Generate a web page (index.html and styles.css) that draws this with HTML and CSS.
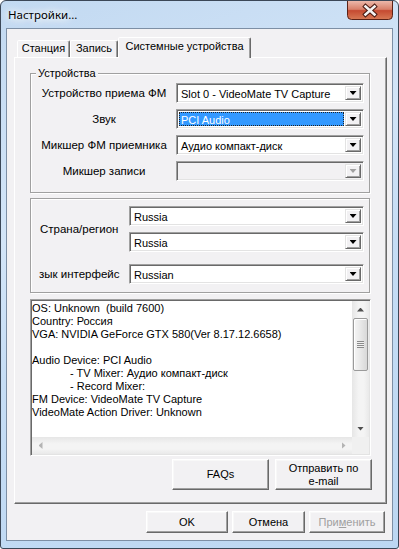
FILE: index.html
```html
<!DOCTYPE html>
<html lang="ru">
<head>
<meta charset="utf-8">
<title>Настройки</title>
<link rel="stylesheet" href="styles.css">
</head>
<body>
<div class="window">
  <div class="titlebar">
    <span class="title">Настройки...</span>
    <div class="close">
      <svg width="46" height="19" viewBox="0 0 46 19">
        <defs>
          <linearGradient id="cg" x1="0" y1="0" x2="0" y2="1">
            <stop offset="0" stop-color="#ecb8aa"/>
            <stop offset="0.45" stop-color="#d8806a"/>
            <stop offset="0.52" stop-color="#c54a31"/>
            <stop offset="1" stop-color="#d77a55"/>
          </linearGradient>
        </defs>
        <path d="M0.5 0 V14.5 Q0.5 18.5 4.5 18.5 H41.5 Q45.5 18.5 45.5 14.5 V0" fill="url(#cg)" stroke="#5a2217"/>
        <path d="M18.5 5.5 L27.5 13.5 M27.5 5.5 L18.5 13.5" stroke="#4a1a12" stroke-width="4.6" stroke-linecap="square"/>
        <path d="M18.5 5.5 L27.5 13.5 M27.5 5.5 L18.5 13.5" stroke="#f4f4f4" stroke-width="2.6" stroke-linecap="square"/>
      </svg>
    </div>
  </div>
  <div class="client">
    <div class="tabs">
      <div class="tab t1">Станция</div>
      <div class="tab t2">Запись</div>
      <div class="tab t3 active">Системные устройства</div>
    </div>
    <div class="panel">
      <fieldset class="group g1">
        <legend>Устройства</legend>
        <div class="grid1">
          <span class="lbl">Устройство приема ФМ</span>
          <div class="combo"><span class="val">Slot 0 - VideoMate TV Capture</span><span class="dd"></span></div>
          <span class="lbl">Звук</span>
          <div class="combo"><span class="val sel">PCI Audio</span><span class="dd"></span></div>
          <span class="lbl">Микшер ФМ приемника</span>
          <div class="combo"><span class="val">Аудио компакт-диск</span><span class="dd"></span></div>
          <span class="lbl">Микшер записи</span>
          <div class="combo disabled"><span class="val"></span><span class="dd"></span></div>
        </div>
      </fieldset>
      <div class="group g2">
        <span class="lbl2 span2">Страна/регион</span>
        <div class="combo"><span class="val">Russia</span><span class="dd"></span></div>
        <div class="combo"><span class="val">Russia</span><span class="dd"></span></div>
        <span class="lbl2 last">зык интерфейс</span>
        <div class="combo last"><span class="val">Russian</span><span class="dd"></span></div>
      </div>
      <div class="info">
        <div class="text">OS: Unknown  (build 7600)
Country: Россия
VGA: NVIDIA GeForce GTX 580(Ver 8.17.12.6658)

Audio Device: PCI Audio
<span class="ind">- TV Mixer: Аудио компакт-диск</span>
<span class="ind">- Record Mixer:</span>
FM Device: VideoMate TV Capture
VideoMate Action Driver: Unknown</div>
        <div class="vscroll">
          <span class="arr up"></span>
          <span class="thumb"><span class="grip"></span></span>
          <span class="track"></span>
          <span class="arr down"></span>
        </div>
        <div class="hscroll">
          <span class="arr left"></span>
          <span class="htrack"></span>
          <span class="arr right"></span>
        </div>
        <div class="corner"></div>
      </div>
      <div class="actions">
        <button class="btn big">FAQs</button>
        <button class="btn big">Отправить по<br>e-mail</button>
      </div>
    </div>
    <div class="footer">
      <button class="btn b-ok">OK</button>
      <button class="btn b-cancel">Отмена</button>
      <button class="btn b-apply" disabled>При<u>м</u>енить</button>
    </div>
  </div>
</div>
</body>
</html>
```
FILE: styles.css
```css
* { box-sizing: border-box; }
html, body { margin: 0; padding: 0; }
body {
  width: 399px;
  height: 549px;
  overflow: hidden;
  background: #fff;
  font-family: "Liberation Sans", Arial, sans-serif;
  font-size: 11px;
  color: #000;
}

.window {
  width: 399px;
  height: 549px;
  border: 1px solid #3b4757;
  border-radius: 6px 6px 3px 3px;
  background: linear-gradient(160deg, #c2d9f1 0%, #d3e5f8 35%, #c6ddf5 55%, #bcd7f2 100%);
  padding: 0 5px 7px;
  display: flex;
  flex-direction: column;
}

.titlebar {
  height: 27px;
  display: flex;
  justify-content: space-between;
  align-items: flex-start;
}
.title {
  padding: 7px 0 0 2px;
  font-family: "Noto Sans", "Open Sans", sans-serif;
  font-size: 11.5px;
  line-height: 14px;
  color: #000;
  text-shadow: 0 0 6px #fff, 0 0 10px #fff, 0 0 12px #eef6ff;
}
.close { width: 46px; height: 19px; }
.close svg { display: block; }

.client {
  flex: 1;
  border: 1px solid #7d8fa5;
  background: #f2f1f3;
  padding: 8px 5px 0 7px;
  display: flex;
  flex-direction: column;
}

.tabs {
  height: 20px;
  display: flex;
  align-items: flex-end;
  padding-left: 3px;
}
.tab {
  height: 17px;
  border-style: solid;
  border-width: 1px 1px 0 1px;
  border-color: #fff #696969 transparent #fff;
  box-shadow: inset -1px 0 0 #a0a0a0;
  border-radius: 2px 2px 0 0;
  background: #f2f1f3;
  text-align: center;
  line-height: 15px;
  white-space: nowrap;
}
.t1 { width: 53px; }
.t2 { width: 48px; }
.t3 { width: 133px; }
.tab.active {
  height: 21px;
  margin-bottom: -1px;
  line-height: 16px;
  position: relative;
  z-index: 1;
}

.panel {
  height: 447px;
  border: 1px solid;
  border-color: #fff #696969 #696969 #fff;
  box-shadow: inset -1px -1px 0 #a0a0a0;
  padding: 0 0 0 15px;
}

.group {
  width: 340px;
  border: 1px solid #a0a0a0;
  box-shadow: inset 1px 1px 0 #fff, 1px 1px 0 #fff;
}
fieldset.group {
  margin: 8px 0 0;
  padding: 3px 5px 11px 7px;
  min-width: 0;
}
legend {
  margin-left: -2px;
  padding: 0 2px;
  line-height: 14px;
  background: #f2f1f3;
}
.grid1 {
  display: grid;
  grid-template-columns: 132px 188px;
  grid-auto-rows: 20px;
  column-gap: 6px;
  row-gap: 6px;
  align-items: center;
}
.lbl { text-align: center; white-space: nowrap; font-size: 11.5px; }

.g2 {
  margin-top: 5px;
  padding: 7px 5px 8px 0;
  display: grid;
  grid-template-columns: 98px 235px;
  grid-template-rows: 20px 20px 26px;
  row-gap: 6px;
}
.lbl2 { padding-left: 9px; align-self: center; white-space: nowrap; font-size: 11.5px; }
.lbl2.span2 { grid-row: 1 / 3; }
.lbl2.last { align-self: end; line-height: 20px; padding-left: 8px; }
.combo.last { align-self: end; }

.combo {
  height: 20px;
  border: 1px solid;
  border-color: #a0a0a0 #fff #fff #a0a0a0;
  box-shadow: inset 1px 1px 0 #696969, inset -1px -1px 0 #e3e3e3;
  background: #fff;
  padding: 2px;
  display: flex;
  align-items: stretch;
}
.combo .val {
  flex: 1;
  padding-left: 2px;
  line-height: 16px;
  white-space: nowrap;
  overflow: hidden;
}
.combo .val.sel {
  background: #3399ff;
  color: #fff;
  outline: 1px dotted #222;
  outline-offset: -1px;
  margin-right: 1px;
}
.combo .dd {
  width: 16px;
  border: 1px solid;
  border-color: #e3e3e3 #696969 #696969 #e3e3e3;
  box-shadow: inset 1px 1px 0 #fff, inset -1px -1px 0 #a0a0a0;
  background: #f2f1f3;
  display: flex;
  align-items: center;
  justify-content: center;
}
.combo .dd::after {
  content: "";
  width: 7px;
  height: 4px;
  background: #000;
  clip-path: polygon(0 0, 100% 0, 50% 100%);
}
.combo.disabled { background: #f2f1f3; }
.combo.disabled .dd::after { background: #a0a0a0; }

.info {
  margin-top: 6px;
  width: 341px;
  height: 157px;
  border: 1px solid;
  border-color: #a0a0a0 #fff #fff #a0a0a0;
  box-shadow: inset 1px 1px 0 #696969, inset -1px -1px 0 #e3e3e3;
  background: #fff;
  padding: 1px;
  display: grid;
  grid-template-columns: 1fr 17px;
  grid-template-rows: 1fr 17px;
}
.text {
  white-space: pre;
  line-height: 13px;
  padding: 1px 0 0 0;
  overflow: hidden;
}
.ind { padding-left: 38px; }

.vscroll {
  display: flex;
  flex-direction: column;
  background: linear-gradient(to right, #e6e6e6, #f4f4f4 40%, #f4f4f4 70%, #e9e9e9);
}
.arr {
  width: 17px;
  height: 17px;
  display: flex;
  align-items: center;
  justify-content: center;
  flex: none;
}
.arr::after {
  content: "";
  background: #4f4f4f;
}
.arr.up::after { width: 7px; height: 4px; clip-path: polygon(50% 0, 100% 100%, 0 100%); }
.arr.down::after { width: 7px; height: 4px; clip-path: polygon(0 0, 100% 0, 50% 100%); }
.arr.left::after { width: 4px; height: 7px; background: #b4b4b4; clip-path: polygon(100% 0, 100% 100%, 0 50%); }
.arr.right::after { width: 4px; height: 7px; background: #b4b4b4; clip-path: polygon(0 0, 100% 50%, 0 100%); }
.thumb {
  height: 53px;
  margin: 0 1px;
  border: 1px solid #9a9a9a;
  border-radius: 2px;
  background: linear-gradient(to right, #f5f5f5, #e8e8e8 50%, #d8d8d8);
  box-shadow: inset 1px 1px 0 #fff;
  display: flex;
  align-items: center;
  justify-content: center;
  flex: none;
}
.grip {
  width: 7px;
  height: 7px;
  background: repeating-linear-gradient(to bottom, #8a8a8a 0 1px, #f0f0f0 1px 2px);
}
.track { flex: 1; }

.hscroll {
  display: flex;
  background: linear-gradient(to bottom, #e6e6e6, #f4f4f4 40%, #f4f4f4 70%, #e9e9e9);
}
.htrack { flex: 1; }
.corner { background: #f0f0f0; }

.actions {
  width: 342px;
  margin-top: 3px;
  display: flex;
  justify-content: flex-end;
  gap: 6px;
}

.btn {
  font-family: "Liberation Sans", Arial, sans-serif;
  font-size: 11px;
  color: #000;
  background: #f2f1f3;
  border: 1px solid;
  border-color: #fff #696969 #696969 #fff;
  box-shadow: inset -1px -1px 0 #a0a0a0, inset 1px 1px 0 #f8f8f8;
  padding: 0;
  margin: 0;
  line-height: 13px;
  text-align: center;
}
.btn.big { width: 97px; height: 31px; }
.btn[disabled] { color: #a0a0a0; }
.btn u { text-decoration: underline; }

.footer {
  margin-top: 7px;
  padding-right: 2px;
  display: flex;
  justify-content: flex-end;
  gap: 4px;
}
.footer .btn { height: 22px; }
.b-ok { width: 82px; }
.b-cancel { width: 73px; }
.b-apply { width: 76px; }
```
